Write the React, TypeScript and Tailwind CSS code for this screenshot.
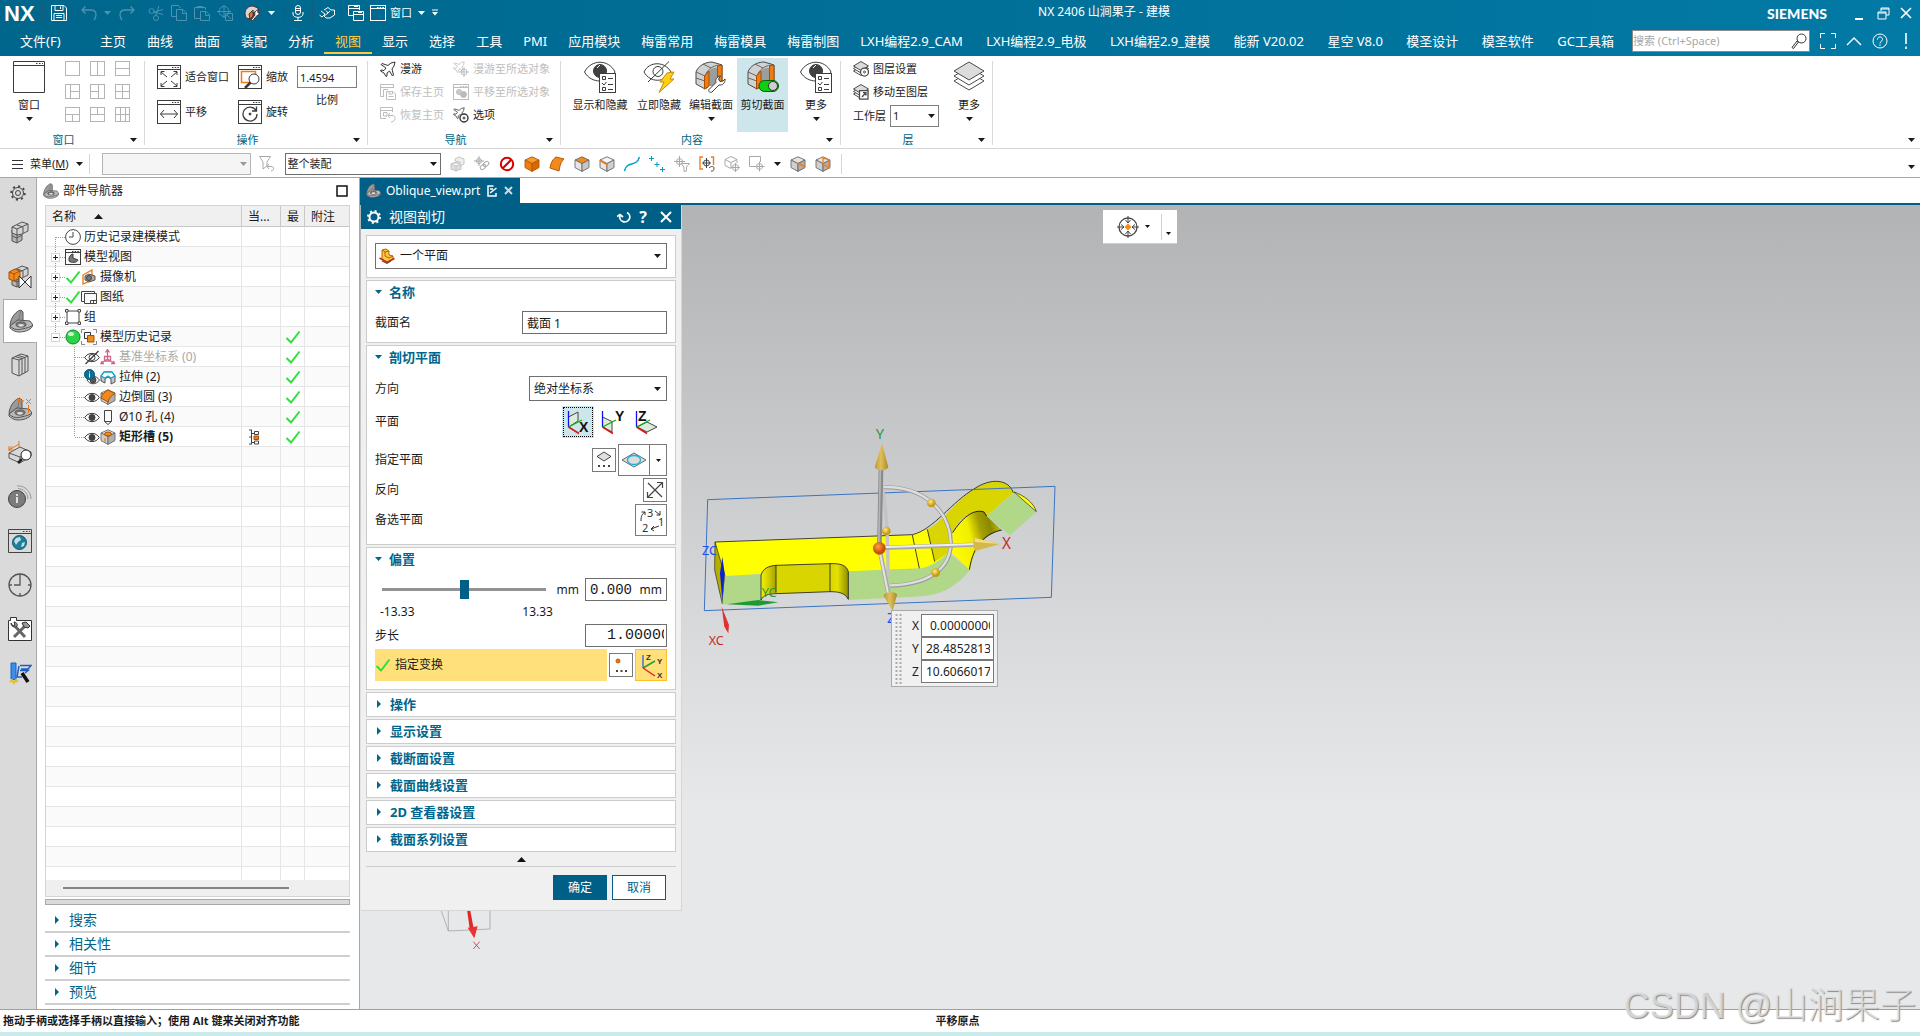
import React, { ReactNode } from "react";

type IconProps = { s?: number; vb?: number; c?: string; className?: string; children?: ReactNode };

function Svg({ s = 16, vb, c = "#4a4a4a", className = "", children }: IconProps) {
  const v = vb ?? s;
  return (
    <svg
      width={s}
      height={s}
      viewBox={`0 0 ${v} ${v}`}
      fill="none"
      stroke={c}
      strokeWidth={1}
      className={`shrink-0 ${className}`}
      aria-hidden="true"
    >
      {children}
    </svg>
  );
}

function Caret({ c = "#1a1a1a", className = "" }: { c?: string; className?: string }) {
  return (
    <svg width="7" height="4" viewBox="0 0 7 4" className={`shrink-0 ${className}`} aria-hidden="true">
      <path d="M0 0H7L3.5 4Z" fill={c} />
    </svg>
  );
}

/* ---------- shared drawings ---------- */

function Win({ s = 24, c = "#3c3c3c", children }: IconProps) {
  return (
    <Svg s={s} c={c}>
      <rect x=".5" y=".5" width={s - 1} height={s - 1} fill={s > 20 ? "#fff" : "none"} />
      <path d={`M0 ${s > 20 ? 4.5 : 3.5}H${s}`} />
      <path d={`M${s - 9} 2.5H${s - 2}`} strokeDasharray="1.5 1.2" />
      {children}
    </Svg>
  );
}

function Cube({ s = 16, top = "#e4e4e4", left = "#cfcfcf", right = "#b0b0b0", line = "#6a6a6a", children }: IconProps & { top?: string; left?: string; right?: string; line?: string }) {
  return (
    <Svg s={s} vb={16} c={line}>
      <g strokeLinejoin="round" strokeWidth=".9">
        <path d="M8 .8L15 4L8 7.6L1 4Z" fill={top} />
        <path d="M1 4L8 7.6V15.4L1 11.6Z" fill={left} />
        <path d="M15 4L8 7.6V15.4L15 11.6Z" fill={right} />
      </g>
      {children}
    </Svg>
  );
}

function Bracket({ s = 24 }: { s?: number }) {
  return (
    <Svg s={s} vb={24} c="#555">
      <path d="M1 16C2 8 7 2 12 1L14 3V12L7 15L2 18Z" fill="#9b9b9b" />
      <path d="M12 1L10 10L2 16" stroke="#777" />
      <path d="M1 17L9 11L21 12L24 16C23 20 17 23 10 23C6 23 3 21 1 19Z" fill="#b9b9b9" />
      <path d="M1 17C5 21 9 21 13 20C18 19 22 18 24 16" />
      <ellipse cx="12" cy="15.5" rx="5" ry="2.6" fill="#777" />
      <ellipse cx="12" cy="16.3" rx="3" ry="1.4" fill="#ddd" stroke="none" />
    </Svg>
  );
}

function Eye({ s = 16, off = false }: { s?: number; off?: boolean }) {
  return (
    <Svg s={s} vb={16} c="#3c3c3c">
      <path d="M.7 8.5C4 3 12 3 15.3 8.5C12 14 4 14 .7 8.5Z" fill="#fff" />
      <circle cx="8" cy="8.5" r="3" fill={off ? "none" : "#444"} />
      {off && <path d="M1.5 15L14.5 2" strokeWidth="1.3" />}
    </Svg>
  );
}

function Check() {
  return (
    <Svg s={16} c="#2ee03c">
      <path d="M1.5 9L6 13.5L14.5 2.5" strokeWidth="2" />
    </Svg>
  );
}

function Wrench({ t }: { t?: string }) {
  return (
    <g transform={t}>
      <path
        d="M1 15.5L8 8.5C7 6 8.5 2.5 12.5 2L10.5 5L12 7.5L15 7L17 5C17.5 9 14.5 11.5 11 11L4 18C2 19 0 17.5 1 15.5Z"
        fill="#fff"
        stroke="#3c3c3c"
      />
    </g>
  );
}

function Layers({ s = 32, children }: IconProps) {
  return (
    <Svg s={s} vb={32} c="#4a4a4a">
      {[10, 5, 0].map((d) => (
        <path key={d} d={`M16 ${1 + d}L31 ${10 + d}L16 ${19 + d}L1 ${10 + d}Z`} fill={d === 0 ? "#dcdcdc" : "#fff"} strokeWidth={s < 20 ? 2 : 1} />
      ))}
      {children}
    </Svg>
  );
}

function SectionBody({ children }: { children?: ReactNode }) {
  return (
    <Svg s={32} c="#4a4a4a">
      <path d="M1 11C3 5 10 1 17 1L24 3L27 4V22L22 25V12C21 9 15 10 13 13V26L10 28L1 23Z" fill="#d2d2d2" />
      <path d="M13 13C14 7 20 6 24 7V24L17 25L13 25Z" fill="#9d9d9d" stroke="none" />
      <path d="M1 11L10 15M1 17L10 20M10 15V28M10 15C12 9 17 5 24 4M8 3L16 7" stroke="#666" />
      <path d="M9.5 15L14 10V25L9.5 28Z" fill="#f07d14" stroke="#a85000" />
      <path d="M22.500 5L27 4V20L22.500 23Z" fill="#f07d14" stroke="#a85000" />
      {children}
    </Svg>
  );
}

function EyeList() {
  return (
    <Svg s={32} c="#3c3c3c">
      <path d="M.5 11C7 -2 25 -2 31 11C25 23 7 23 .5 11Z" fill="#fff" />
      <circle cx="16" cy="10" r="6.5" fill="#3f4143" />
      <path d="M13 7L16 4" stroke="#fff" />
      <rect x="15.500" y="12.500" width="16" height="19" fill="#fff" />
      <path d="M18.500 15.500h3v3h-3zM18.500 26.500h3v3h-3zM24 17.500h5M24 23.500h5M24 28.500h5M18 22l2 2l2.500-3" />
    </Svg>
  );
}

/* ---------- title bar and menu ---------- */

const coreMenus = ["主页", "曲线", "曲面", "装配", "分析", "视图", "显示", "选择", "工具", "PMI", "应用模块", "梅雷常用", "梅雷模具", "梅雷制图"];
const extraMenus = ["LXH编程2.9_CAM", "LXH编程2.9_电极", "LXH编程2.9_建模", "能新 V20.02", "星空 V8.0", "模圣设计", "模圣软件", "GC工具箱"];

function Bar({ className = "" }: { className?: string }) {
  return <span className={`h-[18px] w-px bg-[#1b5a76] ${className}`} />;
}

function IconButton({ label, className = "", children }: { label: string; className?: string; children: ReactNode }) {
  return (
    <button type="button" aria-label={label} className={`flex shrink-0 items-center justify-center ${className}`}>
      {children}
    </button>
  );
}

function TitleBar() {
  const dim = "#4d93b0";
  return (
    <div className="relative flex h-[26px] items-center text-white">
      <span className="ml-1 w-[38px] pt-0.5 font-['Liberation_Sans',sans-serif] text-[22px] leading-6 font-bold">NX</span>
      <Bar />
      <IconButton label="保存" className="mx-2">
        <Svg c="#fff">
          <path d="M.5 .5H13L15.500 3V15.500H.5ZM4 .5V5.500H12V.5M3 15V8.500H13V15M9.500 1.500V4M5 10.500H11M5 12.500H11" />
        </Svg>
      </IconButton>
      <Bar />
      <IconButton label="撤销" className="ml-1 w-[17px]">
        <Svg c={dim}><path d="M4.500 1.500L1 5L4.500 8.500M1 5H10C16 5 16 11 13 15" strokeWidth="1.300" /></Svg>
      </IconButton>
      <Caret c={dim} className="mx-[7px]" />
      <IconButton label="重做" className="w-[17px]">
        <Svg c={dim}><path d="M11.500 1.500L15 5L11.500 8.500M15 5H6C0 5 0 11 3 15" strokeWidth="1.300" /></Svg>
      </IconButton>
      <Bar className="ml-1.5" />
      <div className="ml-1.5 flex gap-[7px]">
        <IconButton label="剪切"><Svg c={dim}><circle cx="3.500" cy="6" r="2.500" /><circle cx="8" cy="13" r="2.500" /><path d="M5.500 7L15 9.500M7.500 10.500L11 1M6 7L15 4.500" /></Svg></IconButton>
        <IconButton label="复制"><Svg c={dim}><path d="M5 11.500H.5V.5H7.500L9.500 3M5.500 4.500H12L15.500 8V15.500H5.500ZM11.500 4.500V8.500H15.500" /></Svg></IconButton>
        <IconButton label="粘贴"><Svg c={dim}><path d="M6 13.500H.5V2.500H11.500V5M3.500 3.500V1.500H8.500V3.500M6.500 6.500H12L15.500 9.500V15.500H6.500ZM11.500 6.500V10.500H15.500" /></Svg></IconButton>
        <IconButton label="特性"><Svg c={dim}><circle cx="7" cy="6.500" r="5" /><path d="M7 0V13M0 6.500H14M8.500 8.500H15.500V15.500H8.500ZM10 10L14 14" /></Svg></IconButton>
      </div>
      <Bar className="ml-1.5" />
      <IconButton label="编辑截面" className="ml-1">
        <Svg c="#433">
          <path d="M1 9C1 4 4 1 9 1L14 3V8L10 7L7 10V14L2 13Z" fill="#d8d5d2" />
          <path d="M5 9L9 5V11L6 14Z" fill="#e9711c" />
          <path d="M7 15L11 10C10 7 12 5 15 5L13.500 7L15.500 9L12 11.500L9 15.500Z" fill="#fff" />
        </Svg>
      </IconButton>
      <Caret c="#fff" className="mx-2" />
      <Bar />
      <IconButton label="语音" className="mx-2 w-3"><Svg c="#fff"><rect x="5.500" y=".5" width="5" height="9" rx="2.500" /><path d="M3 7V9C3 13.500 13 13.500 13 9V7M8 12.500V15M4 15.500H12M6 3.500H10M6 5.500H10" /></Svg></IconButton>
      <Bar />
      <IconButton label="触控" className="mx-1.5"><Svg c="#fff"><path d="M2 6L6 9L3 12L.5 10M5 5L9 2.500L12 5H15.500V10L11 13H7L5 11L9 8L7 5.500M11 6L9 8" /></Svg></IconButton>
      <Bar />
      <div className="ml-1.5 flex items-center gap-1.5">
        <IconButton label="层叠窗口"><Svg c="#fff"><path d="M5 10.500H.5V.5H11.500V5M.5 3.500H11M5.500 6.500H15.500V15.500H5.500ZM5.500 9.500H15.500M6 1.500H10M10 7.500H14" /></Svg></IconButton>
        <button type="button" className="flex items-center gap-1 text-[11px] leading-4"><Win s={16} c="#fff" />窗口<Caret c="#fff" className="ml-0.5" /></button>
        <IconButton label="自定义"><Svg s={8} c="#fff"><path d="M1 1H7" /><path d="M1 3H7L4 6.500Z" fill="#fff" stroke="none" /></Svg></IconButton>
      </div>
      <h1 className="absolute inset-x-0 top-1 mx-auto w-fit pl-[288px] text-xs leading-4 font-normal">NX 2406 山涧果子 - 建模</h1>
      <div className="ml-auto flex items-center">
        <span className="mr-[26px] pt-0.5 font-[Lato,sans-serif] text-sm leading-4 font-black">SIEMENS</span>
        <IconButton label="最小化" className="mr-3 h-4 w-3"><span className="mt-3 h-0.5 w-2 bg-white" /></IconButton>
        <IconButton label="还原" className="mr-2.5"><Svg s={13} c="#fff"><path d="M4 4V1H12V8H9M1 5H9V12H1ZM1 6H9M4 2H12" /></Svg></IconButton>
        <IconButton label="关闭" className="mr-2"><Svg s={12} c="#fff"><path d="M1 1L11 11M11 1L1 11" strokeWidth="1.600" /></Svg></IconButton>
      </div>
    </div>
  );
}

function MenuBar() {
  return (
    <div className="flex h-[30px] items-center pr-1.5 text-[13px] leading-4 text-white">
      <button type="button" className="ml-5 w-20 text-left">文件(F)</button>
      <nav className="flex flex-1 gap-[21px] whitespace-nowrap">
        {coreMenus.map((m) =>
          m === "视图" ? (
            <button key={m} type="button" aria-current="page" className="relative text-[#ffcb45]">
              {m}
              <span className="absolute -inset-x-[11px] -bottom-[5px] h-0.5 bg-[#ffc845]" />
            </button>
          ) : (
            <button key={m} type="button">{m}</button>
          ),
        )}
        <div className="flex flex-1 justify-between">
          {extraMenus.map((m) => (
            <button key={m} type="button">{m}</button>
          ))}
        </div>
      </nav>
      <label className="ml-[18px] flex h-[22px] w-[178px] items-center border border-[#8a8a8a] bg-white pr-0.5">
        <input aria-label="搜索" placeholder="搜索 (Ctrl+Space)" className="w-full min-w-0 flex-1 text-[11px] leading-4 text-black outline-none placeholder:text-[#a8a8a8]" />
        <Svg s={16} c="#333"><circle cx="10.500" cy="5.500" r="4.500" /><path d="M7.500 9L6 8L1 14.500L2.500 15.500Z" /></Svg>
      </label>
      <IconButton label="全屏" className="ml-2.5"><Svg c="#fff"><path d="M.5 5V.5H5M11 .5H15.500V5M15.500 11V15.500H11M5 15.500H.5V11" /></Svg></IconButton>
      <IconButton label="最小化功能区" className="ml-2.5"><Svg c="#fff"><path d="M1 12L8 5L15 12" strokeWidth="1.400" /></Svg></IconButton>
      <IconButton label="帮助" className="ml-2.5"><Svg c="#fff"><circle cx="8" cy="8" r="7" /><path d="M5.500 6.500C5.500 3 10.500 3 10.500 6.500C10.500 8.500 8 8 8 10.500M8 11.500V13" /></Svg></IconButton>
      <IconButton label="警报" className="ml-2.5"><Svg c="#fff"><path d="M8 0V11M8 13.500V16" strokeWidth="1.600" /></Svg></IconButton>
    </div>
  );
}

/* ---------- ribbon ---------- */

function Group({ title, className, children }: { title: string; className: string; children: ReactNode }) {
  return (
    <section className={`relative flex h-[92px] shrink-0 flex-col ${className}`}>
      <div className="flex h-[76px] items-start">{children}</div>
      <div className="relative flex h-4 items-center justify-center pr-[18px] text-[11px] leading-4 text-[#00647f]">
        {title}
        <Caret className="absolute right-2" />
      </div>
      <span className="absolute right-0 top-[5px] h-[84px] w-px bg-[#dadada]" />
    </section>
  );
}

function Tool({ label, dim, children }: { label: string; dim?: boolean; children: ReactNode }) {
  return (
    <button type="button" className={`flex h-4 items-center gap-1 whitespace-nowrap ${dim ? "text-[#bdbdbd]" : "text-[#1a1a1a]"}`}>
      {children}
      {label}
    </button>
  );
}

function Big({ label, caret, on, className = "", children }: { label: string; caret?: boolean; on?: boolean; className?: string; children: ReactNode }) {
  return (
    <button
      type="button"
      aria-pressed={on}
      className={`mt-0.5 flex h-[74px] flex-col items-center pt-[3px] whitespace-nowrap ${on ? "bg-[#cde6eb]" : ""} ${className}`}
    >
      {children}
      <span className="mt-1 leading-4">{label}</span>
      {caret && <Caret className="mt-1" />}
    </button>
  );
}

const layouts = [
  "", "M7.500 0V15", "M0 7.500H15",
  "M5.500 0V15M5.500 7.500H15", "M8.500 0V15M0 7.500H8.500", "M7.500 0V15M0 7.500H15",
  "M0 7.500H15M7.500 7.500V15", "M0 7.500H15M7.500 0V7.500", "M5.500 0V15M10.500 0V15M0 7.500H15",
];

function Ribbon() {
  const gray = "#bdbdbd";
  const plane = (
    <path d="M15 1L11 2L8 4.500L2 2.500L1 3.500L6 7L4 9.500L1 9L.5 10L4 12L6 15.500L7 15L7 12L9.500 10L12.500 15L13.500 14L12 8L14 5Z" />
  );
  return (
    <div className="flex h-[93px] shrink-0 border-b border-[#d6d6d6] bg-white text-[11px] leading-4 text-[#1a1a1a]">
      <Group title="窗口" className="w-[145px]">
        <Big label="窗口" caret className="ml-[13px] w-8">
          <svg width="32" height="32" viewBox="0 0 32 32" fill="none" stroke="#3c3c3c" aria-hidden="true"><path d="M.5 .5H31.500V31.500H.5ZM.5 4.500H31.500" /><path d="M23 2.500H30" strokeDasharray="1.500 1.500" /></svg>
        </Big>
        <div className="mt-[5px] ml-5 grid grid-cols-3 gap-x-[10px] gap-y-2">
          {layouts.map((d, i) => (
            <IconButton key={i} label={`布局 ${i + 1}`}>
              <Svg s={15} c="#b4b4b4"><rect x=".5" y=".5" width="14" height="14" /><path d={d} /></Svg>
            </IconButton>
          ))}
        </div>
      </Group>
      <Group title="操作" className="w-[223px]">
        <div className="mt-[9px] ml-3 grid grid-cols-[81px_auto] gap-y-[11px]">
          <button type="button" className="flex h-6 items-center gap-1 whitespace-nowrap"><Win><path d="M10 12L4 7M4 10V6.500H7.500M14 12L20 7M20 10V6.500H16.500M10 16L4 21M4 18V21.500H7.500M14 16L20 21M20 18V21.500H16.500" /></Win>适合窗口</button>
          <button type="button" className="flex h-6 items-center gap-1"><Win><rect x="3.500" y="6.500" width="14" height="11" stroke="#f07d14" strokeWidth="1.500" /><circle cx="16" cy="14" r="5" fill="#fff" /><path d="M12.500 17.500L7 23" strokeWidth="2.500" /></Win>缩放</button>
          <button type="button" className="flex h-6 items-center gap-1"><Win><path d="M3.500 14H20.500M7 10L3.500 14L7 18M17 10L20.500 14L17 18" /></Win>平移</button>
          <button type="button" className="flex h-6 items-center gap-1"><Win><path d="M18 10.500A7 7 0 1 0 19 14M18.500 6.500V11H14" strokeWidth="1.300" /><circle cx="12" cy="14" r="1" fill="#333" /></Win>旋转</button>
        </div>
        <label className="mt-[10px] ml-[9px] flex flex-col items-center">
          <input defaultValue="1.4594" className="h-[22px] w-[60px] border border-[#808080] px-0.5 text-[11px] leading-4" />
          <span className="mt-1">比例</span>
        </label>
      </Group>
      <Group title="导航" className="w-[193px]">
        <div className="mt-[5px] ml-3 grid grid-cols-[73px_auto] gap-y-[7px]">
          <Tool label="漫游"><Svg c="#333">{plane}</Svg></Tool>
          <Tool label="漫游至所选对象" dim><Svg c={gray}><g transform="scale(.75)">{plane}</g><circle cx="11" cy="11" r="3" /><path d="M11 6V16M6 11H16" /></Svg></Tool>
          <Tool label="保存主页" dim><Svg c={gray}><path d="M4 12.500H.5V.5H13.500V4M.5 3.500H13M3.500 12V5.500H8M6.500 7.500H13L15.500 10V15.500H6.500ZM9 7.500V10H12.500V7.500M8.500 12.500H13.500" /></Svg></Tool>
          <Tool label="平移至所选对象" dim><Win s={16} c={gray}><circle cx="6" cy="8" r="2.500" fill="#ccc" /><circle cx="10.500" cy="10.500" r="3" fill="#bbb" /></Win></Tool>
          <Tool label="恢复主页" dim><Svg c={gray}><path d="M6 11.500H.5V.5H12.500V5M.5 3.500H12M3.500 9V5.500H7V9ZM10 6L8 8.500L10 11M8 8.500H12C16.500 8.500 16 14.500 11 15" /></Svg></Tool>
          <Tool label="选项"><Svg c="#333"><g transform="scale(.75)">{plane}</g><circle cx="11" cy="11" r="4" fill="#fff" strokeWidth="1.400" /><circle cx="11" cy="11" r="1" /></Svg></Tool>
        </div>
      </Group>
      <Group title="内容" className="w-[280px]">
        <Big label="显示和隐藏" className="ml-2.5 w-[58px]"><EyeList /></Big>
        <Big label="立即隐藏" className="ml-[7px] w-[46px]">
          <Svg s={32} c="#3c3c3c">
            <path d="M1 11C6 0 22 0 28 11C22 22 7 22 1 11Z" />
            <circle cx="15" cy="10.500" r="5" />
            <path d="M5 21L26 .5" />
            <path d="M24 12L31 11L27 18H31L16 31.500L21 21H17Z" fill="#fdd017" stroke="#c78a00" />
          </Svg>
        </Big>
        <Big label="编辑截面" caret className="ml-1.5 w-[46px]">
          <SectionBody><Wrench t="translate(13 13)" /></SectionBody>
        </Big>
        <Big label="剪切截面" on className="ml-[3px] w-[51px]">
          <SectionBody>
            <rect x="12" y="19.500" width="19.500" height="11" rx="5.500" fill="#0ccf14" stroke="#045f08" />
            <circle cx="26" cy="25" r="4.500" fill="#cfcfcf" stroke="#333" />
          </SectionBody>
        </Big>
        <Big label="更多" caret className="ml-3 w-8"><EyeList /></Big>
      </Group>
      <Group title="层" className="w-[152px]">
        <div className="mt-[5px] ml-3 flex w-[87px] flex-col gap-[7px]">
          <Tool label="图层设置"><Layers s={16}><circle cx="23" cy="22" r="8" fill="#fff" strokeWidth="2.500" /><circle cx="23" cy="22" r="2" strokeWidth="2" /></Layers></Tool>
          <Tool label="移动至图层"><Layers s={16}><path d="M13 13H30V30H13ZM18 26L26 17M20 17H26V23" fill="#fff" strokeWidth="2.500" /></Layers></Tool>
          <label className="-mt-0.5 flex items-center gap-1 whitespace-nowrap">
            工作层
            <span className="relative flex items-center">
              <select className="h-[22px] w-[49px] appearance-none border border-[#808080] bg-white px-0.5 leading-4"><option>1</option></select>
              <Caret className="pointer-events-none absolute right-1" />
            </span>
          </label>
        </div>
        <Big label="更多" caret className="ml-[13px] w-8"><Layers /></Big>
      </Group>
      <IconButton label="功能区选项" className="mt-[82px] mr-[5px] ml-auto h-1"><Caret /></IconButton>
    </div>
  );
}

function SelectionBar() {
  const g = "#a9a9a9";
  return (
    <div className="flex h-[29px] shrink-0 items-center border-b border-[#a6a6a6] bg-white pt-0.5 text-[11px] leading-4 text-[#1a1a1a]">
      <button type="button" className="ml-3 flex items-center gap-[7px]">
        <Svg s={11} c="#333"><path d="M0 1.500H11M0 5.500H11M0 9.500H11" /></Svg>
        <span>菜单(<u>M</u>)</span>
        <Caret />
      </button>
      <span className="ml-1.5 h-5 w-px bg-[#d6d6d6]" />
      <span className="relative ml-3 flex items-center">
        <select disabled aria-label="类型过滤器" className="h-[22px] w-[149px] appearance-none border border-[#b4b4b4] bg-[#f5f5f5]"><option></option></select>
        <Caret c="#999" className="absolute right-1" />
      </span>
      <IconButton label="重置过滤器" className="ml-2"><Svg c={g}><path d="M.5 .5H11.500L8 6V10L4 13V6ZM10 8L8 10.500L10 13M8 10.500H12C16 10.500 15 15 12 15" /></Svg></IconButton>
      <span className="relative ml-2.5 flex items-center">
        <select aria-label="选择范围" className="h-[22px] w-[156px] appearance-none border border-[#6e6e6e] bg-white px-0.5 leading-4"><option>整个装配</option></select>
        <Caret className="pointer-events-none absolute right-1" />
      </span>
      <div className="ml-2 flex items-center gap-[9px]">
        <IconButton label="组件"><Svg c="#c4c4c4"><path d="M2 8L7 6L12 8V13L7 15L2 13ZM2 8L7 10L12 8M7 10V15" fill="#dedede" /><path d="M6 3L10 1L15 3V8L11 10V6L6 5Z" fill="#efefef" /></Svg></IconButton>
        <IconButton label="关联"><Svg c={g}><path d="M5 0V10M0 5H10" /><circle cx="5" cy="5" r="2.500" /><rect x="6" y="9" width="6" height="4" rx="2" transform="rotate(-40 9 11)" /><rect x="9" y="6" width="6" height="4" rx="2" transform="rotate(-40 12 8)" /></Svg></IconButton>
        <IconButton label="禁止"><Svg c="#d40000"><circle cx="8" cy="8" r="6.200" strokeWidth="2" /><path d="M4 12L12 4" strokeWidth="2" /></Svg></IconButton>
        <IconButton label="实体"><Cube top="#f79a2e" left="#ee7d10" right="#d96800" line="#b35a00" /></IconButton>
        <IconButton label="面"><Svg c="#b35a00"><path d="M1 12C2 6 4 3 7 1L15 3C12 6 11 9 10 15Z" fill="#f08a1c" /></Svg></IconButton>
        <IconButton label="顶面"><Cube top="#f58a1b" left="#e6e6e6" right="#c6c6c6" /></IconButton>
        <IconButton label="边"><Cube top="#f4f4f4" left="#e6e6e6" right="#cfcfcf"><path d="M1 4.500L8 8.500" stroke="#f07d14" strokeWidth="1.600" /></Cube></IconButton>
        <IconButton label="曲线"><Svg c="#00a0c4"><path d="M.5 15C3 4 12 12 15.500 1" strokeWidth="1.400" /></Svg></IconButton>
        <IconButton label="点"><Svg c="#00a0c4"><path d="M2.500 0V5M0 2.500H5M8 6V11M5.500 8.500H10.500M13.500 11V16M11 13.500H16" /></Svg></IconButton>
        <IconButton label="点过滤器"><Svg c={g}><circle cx="5.500" cy="5.500" r="3" /><path d="M5.500 0V11M0 5.500H11M7 7.500H15.500L12.500 11V15L10 15.500V11Z" /></Svg></IconButton>
        <IconButton label="捕捉点"><Svg c="#444"><path d="M4 1H1V13H4M12 1H14.500V9" stroke="#f07d14" strokeWidth="1.400" /><circle cx="7.500" cy="7" r="3" /><path d="M7.500 2V12M3 7H12" /><path d="M10 12C12 10 15 10 15 12C15 14 14 15.500 12 15" /></Svg></IconButton>
        <IconButton label="快速拾取"><Svg c={g}><path d="M7 .5L13 3.500V7M13 3.500L7 6.500L1 3.500L7 .5M1 3.500V9.500L7 12.500V6.500" /><circle cx="11.500" cy="11.500" r="3" /><path d="M11.500 7V16M7 11.500H16" /></Svg></IconButton>
        <IconButton label="矩形选择"><Svg c={g}><path d="M6 10.500H.5V.5H11.500V6" /><circle cx="10.500" cy="10.500" r="3" /><path d="M10.500 5.500V15.500M5.500 10.500H15.500" /></Svg></IconButton>
        <Caret />
        <IconButton label="显示边"><Cube><path d="M8 7L15 11" stroke="#f07d14" strokeWidth="1.800" /></Cube></IconButton>
        <IconButton label="显示面"><Cube><path d="M8 2L14 4V12L8 8Z" stroke="#f07d14" strokeWidth="1.300" /></Cube></IconButton>
      </div>
      <span className="ml-2.5 h-5 w-px bg-[#d6d6d6]" />
      <IconButton label="选择条选项" className="mt-1.5 mr-[5px] ml-auto"><Caret /></IconButton>
    </div>
  );
}

/* ---------- resource rail ---------- */

function Blocks({ orange }: { orange?: boolean }) {
  return (
    <Svg s={24} c="#555">
      <path d="M4 9L10 6L14 8V19L9 22L4 20Z" fill="#b4b4b4" />
      <path d="M4 9L9 11L14 8M9 11V22M4 15L9 17L14 14" />
      <path d="M4 6L14 1L20 3V10L14 13L9 14L4 12Z" fill="#d4d4d4" />
      <path d="M4 6L9 8L20 3M9 8V14M9 4L15 6V12" />
      {orange && (
        <>
          <path d="M1 7L7 4L12 6V13L6 16L1 14Z" fill="#f08a1c" stroke="#a85000" />
          <path d="M1 7L6 9L12 6M6 9V16" stroke="#a85000" />
          <path d="M11 11V23L23 11V23Z" fill="#fff" stroke="#333" />
        </>
      )}
    </Svg>
  );
}

const rail: { label: string; icon: ReactNode }[] = [
  { label: "装配导航器", icon: <Blocks /> },
  { label: "约束导航器", icon: <Blocks orange /> },
  { label: "部件导航器", icon: <Bracket /> },
  { label: "重用库", icon: <Svg s={24} c="#555"><path d="M4 5L13 1L20 3V18L11 23L4 20Z" fill="#d8d8d8" /><path d="M4 5L11 7V23M11 7L20 3M7 3.500L14 5.500V21M10 2.500L17 4.500V20" /></Svg> },
  { label: "PMI 导航器", icon: <div className="relative"><Bracket /><Svg s={24} c="#e8781a" className="absolute inset-0"><path d="M10 4H16M10 1V7M13 1L10 4L13 7M18 2L23 7M23 2L18 7M20.500 8V16" /></Svg></div> },
  { label: "检查", icon: <Svg s={24} c="#555"><path d="M1 12L12 6L23 11V15L12 22L1 17Z" fill="#d8d8d8" /><path d="M1 12L12 16L23 11M12 16V22" /><path d="M1 9L11 3M1 5V10M11 0V6M4 5L1 9L6 9" stroke="#e8781a" /><circle cx="18" cy="14" r="5" fill="#fff" stroke="#222" /><path d="M14 18L10 22" stroke="#222" strokeWidth="2.500" /></Svg> },
  { label: "信息", icon: <Svg s={24} c="#999"><circle cx="9" cy="14" r="8.500" fill="#7c7c7c" stroke="#444" /><path d="M9 12V18M9 9V11" stroke="#fff" strokeWidth="1.500" /><path d="M9 1C17 0 23 7 23 14M10 3.500C16 4 19.500 8 20 14" /></Svg> },
  { label: "浏览器", icon: <Svg s={24} c="#444"><path d="M.5 .5H23.500V23.500H.5ZM0 4.500H24" /><path d="M15 2.500H22" strokeDasharray="1.500 1.500" /><circle cx="11.500" cy="13.500" r="7" fill="#1e7f9a" stroke="#12586d" /><path d="M8 9L12 8L13 11L10 13L8 16L6 12ZM14 14L17 13L16 17L13 18Z" fill="#bfe0e8" stroke="none" /></Svg> },
  { label: "历史记录", icon: <Svg s={24} c="#555"><circle cx="12" cy="12" r="11" strokeWidth="1.300" /><path d="M12 3V12H6M1 12H4M20 12H23M12 20V23M12 1V3" strokeWidth="1.300" /></Svg> },
  { label: "加工工具", icon: <Svg s={24} c="#333"><path d="M.5 3.500H2.500V.5H8.500V3.500H23.500V23.500H.5Z" fill="#fff" /><path d="M6 8L17 20M18 8L6 20" stroke="#666" strokeWidth="3" /><path d="M3 6C3 10 7 11 9 9C10 7 8 5 6 5L7 8L5 9ZM14 6L18 5L22 9L20 11L16 10Z" fill="#999" /></Svg> },
  { label: "向导", icon: <Svg s={24} c="#1d5fc4"><path d="M3 2H8V19L3 18Z" fill="#3d8ee6" /><path d="M12 4.500H23L20 8H13M12 9.500H20L17 12M11 5L9 16H14" strokeWidth="1.500" /><path d="M2 21L4 19L6 22L8 19L10 21" stroke="#e9c21a" strokeWidth="2" /><path d="M14 12L20 21" stroke="#111" strokeWidth="3.500" /></Svg> },
];

function Rail() {
  return (
    <nav className="flex w-[37px] shrink-0 flex-col items-center border-r border-[#a8a8a8] bg-[#dadada]" aria-label="资源条">
      <IconButton label="设置" className="h-[33px] w-9 pb-1">
        <Svg s={16} c="#444"><circle cx="8" cy="8" r="5.500" /><circle cx="8" cy="8" r="2.500" /><circle cx="8" cy="8" r="6.800" strokeDasharray="2.200 3.100" strokeWidth="1.800" /></Svg>
      </IconButton>
      {rail.map((r) => (
        <IconButton
          key={r.label}
          label={r.label}
          className={`h-11 ${r.label === "部件导航器" ? "-mr-px w-[34px] self-end border border-r-0 border-[#a8a8a8] bg-white" : "w-9 pl-1"}`}
        >
          {r.icon}
        </IconButton>
      ))}
    </nav>
  );
}

/* ---------- part navigator ---------- */

type Row = { text: string; level: 0 | 1; box?: "+" | "-"; icons: ReactNode[]; dim?: boolean; bold?: boolean; ok?: boolean; mark?: boolean; last?: boolean; first?: boolean };

const rows: Row[] = [
  { text: "历史记录建模模式", level: 0, first: true, icons: [<Svg key="a" c="#444"><circle cx="8" cy="8" r="7.400" /><path d="M8 3V8H4" /></Svg>] },
  { text: "模型视图", level: 0, box: "+", icons: [<Win key="a" s={16}><path d="M4 9C5 6 7 5 8 5V9L13 11C12 14 6 14 4 12Z" fill="#777" /></Win>] },
  { text: "摄像机", level: 0, box: "+", icons: [<Check key="a" />, <Svg key="b" c="#e8781a"><path d="M2 6L11 1V11L2 15Z" fill="#fff" strokeWidth="1.300" /><path d="M4 7L8 5L14 7V11L8 13L4 11Z" fill="#aaa" stroke="#555" /><circle cx="8" cy="9" r="2.500" fill="#777" stroke="#444" /></Svg>] },
  { text: "图纸", level: 0, box: "+", icons: [<Check key="a" />, <Svg key="b" c="#444"><path d="M3 12.500H.5V2.500H13.500V4M3.500 4.500H15.500V14.500H3.500ZM9.500 14V11.500H15M12.500 11.500V14" /></Svg>] },
  { text: "组", level: 0, box: "+", icons: [<Svg key="a" c="#444"><path d="M2 2H14V14H2Z" /><path d="M.5 .5h2.500v2.500h-2.500zM13 .5h2.500v2.500h-2.500zM.5 13h2.500v2.500h-2.500zM13 13h2.500v2.500h-2.500z" fill="#fff" /></Svg>] },
  { text: "模型历史记录", level: 0, box: "-", last: true, ok: true, icons: [
    <Svg key="a" c="#0a8a20"><circle cx="8" cy="8" r="7" fill="#2fd34a" /><ellipse cx="6" cy="5" rx="3" ry="2" fill="#c9f7cf" stroke="none" /></Svg>,
    <Svg key="b" c="#888"><path d="M.5 4V.5H4M12 .5H15.500V4M15.500 12V15.500H12M4 15.500H.5V12" /><path d="M3.500 3.500H9.500V9.500H3.500Z" stroke="#333" /><path d="M6.500 6.500H13V13H6.500Z" fill="#f08a1c" stroke="#a85000" /></Svg>,
  ] },
  { text: "基准坐标系 (0)", level: 1, dim: true, ok: true, icons: [<Eye key="a" off />, <Svg key="b" c="#d0648c"><path d="M7.500 1V10L1.500 14M7.500 10L14 14M5.500 3.500L7.500 .5L9.500 3.500M4 14.500L1 14.500L2 12M11 14.500H14.500L13.500 12M4.500 7.500L10.500 7.500V12H4.500Z" strokeWidth="1.300" /></Svg>] },
  { text: "拉伸 (2)", level: 1, ok: true, icons: [
    <Svg key="a" c="#444"><path d="M3 11C6 6 12 6 15.500 11C12 16 6 16 3 11Z" fill="#fff" /><circle cx="9" cy="11" r="3" fill="#555" /><circle cx="5.500" cy="5.500" r="5" fill="#0d6f92" stroke="#0a5672" /><path d="M5.500 4.500V8.500M5.500 2.500V3.500" stroke="#fff" /></Svg>,
    <Svg key="b" c="#555"><path d="M1 7L4 3H12L15 7V13L11 15V10L8 8L5 10V14L1 12Z" fill="#c6c6c6" /><path d="M1 7L4 3H12L15 7L11 9L8 7L5 9Z" fill="#fff" stroke="#12a5c8" strokeWidth="1.300" /></Svg>,
  ] },
  { text: "边倒圆 (3)", level: 1, ok: true, icons: [<Eye key="a" />, <Cube key="b"><path d="M1 9C2 5 5 3 8 1L15 4.500C11 7 9 9 8 13Z" fill="#f08a1c" stroke="#a85000" /></Cube>] },
  { text: "Ø10 孔 (4)", level: 1, ok: true, icons: [<Eye key="a" />, <Svg key="b" c="#444"><path d="M4.500 1.500H11.500V12.500L8 15.500L4.500 12.500ZM4.500 12.500H11.500" /></Svg>] },
  { text: "矩形槽 (5)", level: 1, bold: true, ok: true, mark: true, last: true, icons: [<Eye key="a" />, <Cube key="b"><ellipse cx="8" cy="5" rx="3.500" ry="2" fill="#f08a1c" stroke="#a85000" /><path d="M5 9V13" stroke="#f08a1c" strokeWidth="1.500" /></Cube>] },
];

function TreeLines({ r }: { r: Row }) {
  if (r.level === 1) {
    return (
      <svg width="38" height="19" fill="none" stroke="#999" strokeDasharray="1 1" className="shrink-0" aria-hidden="true">
        <path d={r.last ? "M28.500 0V10" : "M28.500 0V20"} /><path d="M29 10.500H38" />
      </svg>
    );
  }
  return (
    <svg width="19" height="19" fill="none" stroke="#999" className="shrink-0" aria-hidden="true">
      <path d={r.first ? "M9.500 10V20" : r.last ? "M9.500 0V10" : "M9.500 0V20"} strokeDasharray="1 1" />
      <path d="M10 10.500H19" strokeDasharray="1 1" />
      {r.box && (
        <>
          <rect x="5.500" y="6.500" width="8" height="8" fill="#fff" stroke="#d5d5d5" />
          <path d={r.box === "+" ? "M7 10.500H12M9.500 8V13" : "M7 10.500H12"} stroke="#222" />
        </>
      )}
    </svg>
  );
}

const sections = ["搜索", "相关性", "细节", "预览"];

function Navigator() {
  const cell = "h-5 border-b border-[#e6e6e6] p-0";
  const mid = `${cell} border-l`;
  return (
    <aside className="flex w-[323px] shrink-0 flex-col border-r border-[#a8a8a8] bg-white pr-[9px] pl-2 text-xs leading-4 text-[#1a1a1a]">
      <header className="-ml-2 flex h-[27px] items-center pb-0.5 pl-1.5">
        <Bracket s={16} />
        <h2 className="ml-1">部件导航器</h2>
        <IconButton label="最大化" className="mr-0.5 ml-auto"><Svg s={12} c="#111"><rect x="1" y="1" width="10" height="10" strokeWidth="1.500" /></Svg></IconButton>
      </header>
      <div className="flex min-h-0 flex-1 flex-col border border-[#d4d4d4]">
        <div className="min-h-0 flex-1 overflow-hidden">
          <table className="w-full table-fixed border-separate border-spacing-0">
            <colgroup><col /><col className="w-[39px]" /><col className="w-6" /><col className="w-[45px]" /></colgroup>
            <thead>
              <tr className="bg-[#f0f0f0] text-left">
                <th className="h-[21px] border-b border-[#c8c8c8] p-0 pt-px pl-1.5 font-normal"><span className="flex items-center gap-[18px]">名称<svg width="9" height="5" aria-hidden="true"><path d="M0 5H9L4.500 0Z" fill="#1a1a1a" /></svg></span></th>
                <th className="border-b border-l border-[#c8c8c8] p-0 pt-px pl-1.5 font-normal">当...</th>
                <th className="border-b border-l border-[#c8c8c8] p-0 pt-px pl-1.5 font-normal">最</th>
                <th className="border-b border-l border-[#c8c8c8] p-0 pt-px pl-1.5 font-normal">附注</th>
              </tr>
            </thead>
            <tbody>
              {rows.map((r, i) => (
                <tr key={r.text} className={i % 2 ? "bg-[#fafafa]" : "bg-white"}>
                  <td className={cell}>
                    <div className={`flex h-[19px] items-center whitespace-nowrap ${r.dim ? "text-[#a8a8a8]" : ""} ${r.bold ? "font-bold" : ""}`}>
                      <TreeLines r={r} />
                      {r.icons}
                      <span className="ml-[3px]">{r.text}</span>
                    </div>
                  </td>
                  <td className={mid}>{r.mark && <Svg s={16} className="ml-1" c="#444"><path d="M5.500 1V15M5.500 4.500H8M5.500 13.500H8M3 1H6M3 8H6M3 15H6M8.500 2.500H12.500V5.500H8.500ZM8.500 12H12.500V15H8.500Z" /><path d="M8 7H12.500V10.500H8Z" fill="#f07d14" stroke="#a85000" /></Svg>}</td>
                  <td className={mid}>{r.ok && <span className="ml-1 block"><Check /></span>}</td>
                  <td className={mid} />
                </tr>
              ))}
              {Array.from({ length: 24 }, (_, i) => (
                <tr key={i} className={i % 2 ? "bg-white" : "bg-[#fafafa]"}>
                  <td className={cell} /><td className={mid} /><td className={mid} /><td className={mid} />
                </tr>
              ))}
            </tbody>
          </table>
        </div>
        <div className="flex h-4 shrink-0 items-center bg-[#efefef] pr-[60px] pl-[17px]"><span className="h-0.5 w-full bg-[#858585]" /></div>
      </div>
      <div className="mt-0.5 h-1.5 shrink-0 border border-[#a8a8a8] bg-[#dadada]" />
      <div className="pt-1 pb-1 text-sm">
        {sections.map((s) => (
          <button key={s} type="button" className="flex h-6 w-full items-center gap-2.5 border-b-2 border-[#cfcfcf] pl-2.5 leading-4 text-[#00668c]">
            <svg width="4" height="8" aria-hidden="true"><path d="M0 0V8L4 4Z" fill="#00668c" /></svg>
            {s}
          </button>
        ))}
      </div>
    </aside>
  );
}

/* ---------- section dialog ---------- */

function Panel({ title, children }: { title?: string; children: ReactNode }) {
  return (
    <section className="border border-[#cccccc] bg-white px-2 pb-2">
      {title && (
        <button type="button" className="flex h-6 items-center gap-[7px] pb-0.5 text-[13px] leading-4 font-bold text-[#00668c]">
          <Caret c="#00668c" />
          {title}
        </button>
      )}
      {children}
    </section>
  );
}

function Line({ label, className = "", children }: { label: string; className?: string; children: ReactNode }) {
  return (
    <div className={`flex items-center justify-between ${className}`}>
      <span>{label}</span>
      {children}
    </div>
  );
}

function AxisPlane({ letter, on }: { letter: "X" | "Y" | "Z"; on?: boolean }) {
  const face = { X: "M6.500 11L16 6V15L6.500 21Z", Y: "M6.500 11L16 15.500V26L6.500 21Z", Z: "M7 21L17 16L27 21L17 26Z" }[letter];
  const at = { X: [17, 26], Y: [19, 15], Z: [8, 15] }[letter];
  return (
    <button type="button" aria-pressed={!!on} aria-label={`${letter} 平面`} className={`h-8 w-8 p-0.5 ${on ? "bg-[#cde6eb]" : ""}`}>
      <svg width="28" height="28" viewBox="2 2 28 28" fill="none" className={on ? "outline-1 outline-dotted outline-black" : ""}>
        <path d={face} fill="#dcebdc" stroke="#444" />
        <path d="M6.500 21V5" stroke="#1010f0" strokeWidth="1.300" />
        <path d="M6.500 21L20 14" stroke="#10b010" strokeWidth="1.300" />
        <path d="M6.500 21L17 27.500" stroke="#d41414" strokeWidth="1.500" />
        <text x={at[0]} y={at[1]} fontSize="14" fontWeight="bold" fill="#111" fontFamily="Liberation Sans, sans-serif">{letter}</text>
      </svg>
    </button>
  );
}

const collapsed = ["操作", "显示设置", "截断面设置", "截面曲线设置", "2D 查看器设置", "截面系列设置"];
const btn = "flex items-center justify-center border border-[#7a7a7a] bg-white";

function Dialog() {
  return (
    <div role="dialog" aria-label="视图剖切" className="absolute top-0 left-px flex w-[321px] flex-col border-r border-b border-[#d6d6d6] bg-[#f0f0f0] text-xs leading-4 text-[#1a1a1a]">
      <header className="flex h-6 items-center bg-[#005f87] pr-2 pl-1.5 text-white">
        <Svg s={14} c="#fff"><circle cx="7" cy="7" r="4.500" strokeWidth="2" /><circle cx="7" cy="7" r="6" strokeDasharray="2 2.700" strokeWidth="2" /></Svg>
        <h2 className="ml-2 text-sm leading-5">视图剖切</h2>
        <div className="ml-auto flex items-center gap-1.5">
          <IconButton label="重置"><Svg s={14} c="#fff"><path d="M10 2.500A5 5 0 1 1 3 5.500M0 6.500L3 4.500L6 7" strokeWidth="1.700" /></Svg></IconButton>
          <button type="button" aria-label="帮助" className="w-3 text-base leading-5 font-bold">?</button>
          <IconButton label="关闭" className="ml-1"><Svg s={14} c="#fff"><path d="M2 2L12 12M12 2L2 12" strokeWidth="2" /></Svg></IconButton>
        </div>
      </header>
      <div className="flex flex-col gap-0.5 px-[5px] pt-1.5">
        <Panel>
          <div className="relative mt-[7px] flex h-[26px] items-center">
            <select aria-label="剖切类型" className="h-full w-full appearance-none border border-[#6e6e6e] bg-white pl-6"><option>一个平面</option></select>
            <Svg s={16} className="pointer-events-none absolute left-1" c="#a8680a">
              <path d="M3 2L7 1L10 3V7L14 8V11L8 14L3 11Z" fill="#ffc73a" /><path d="M3 2L6 4V8L10 10L14 8M6 4L10 3" /><path d="M.5 10L8 14.500L15.500 10.500" stroke="#d42020" strokeWidth="1.500" /><path d="M3 13L8 15.500L12 13" stroke="#444" />
            </Svg>
            <Caret className="pointer-events-none absolute right-1.5" />
          </div>
        </Panel>
        <Panel title="名称">
          <label className="mt-1.5 flex h-[23px] items-center justify-between">截面名<input defaultValue="截面 1" className="h-full w-[145px] border border-[#6e6e6e] px-1" /></label>
        </Panel>
        <Panel title="剖切平面">
          <label className="mt-1.5 flex h-[25px] items-center justify-between">
            方向
            <span className="relative flex h-full items-center">
              <select className="h-full w-[138px] appearance-none border border-[#6e6e6e] bg-white px-1"><option>绝对坐标系</option></select>
              <Caret className="pointer-events-none absolute right-1.5" />
            </span>
          </label>
          <Line label="平面" className="mt-[5px] h-8">
            <div className="mr-[5px] flex gap-0.5"><AxisPlane letter="X" on /><AxisPlane letter="Y" /><AxisPlane letter="Z" /></div>
          </Line>
          <Line label="指定平面" className="mt-1.5 h-8">
            <div className="flex items-center">
              <button type="button" aria-label="平面对话框" className={`mr-0.5 h-6 w-6 ${btn}`}><Svg s={18} c="#444"><path d="M9 1L16 5.500L9 10L2 5.500Z" fill="#e0e0e0" /><path d="M3 15H5M8 15H10M13 15H15" strokeWidth="2" /></Svg></button>
              <button type="button" aria-label="自动判断平面" className={`-mr-px h-8 w-8 ${btn}`}><Svg s={24} c="#666"><path d="M12 5L24 12L12 19L0 12Z" fill="#dcdcdc" /><ellipse cx="12" cy="12" rx="6.500" ry="4.500" stroke="#12b4dc" strokeWidth="1.300" /></Svg></button>
              <button type="button" aria-label="更多平面选项" className={`h-8 w-[18px] ${btn}`}><svg width="5" height="3" aria-hidden="true"><path d="M0 0H5L2.500 3Z" fill="#111" /></svg></button>
            </div>
          </Line>
          <Line label="反向" className="mt-0.5 h-6">
            <button type="button" aria-label="反向" className={`h-6 w-6 ${btn}`}><Svg s={18} c="#444"><path d="M2 2L16 16M1.500 16.500L16.500 1.500M11 1.500H16.500V7M1.500 11V16.500H7" strokeWidth="1.200" /></Svg></button>
          </Line>
          <Line label="备选平面" className="mt-0.5 h-8">
            <button type="button" aria-label="备选平面" className={`h-8 w-8 ${btn}`}>
              <svg width="28" height="28" viewBox="0 0 28 28" fill="none" stroke="#333" aria-hidden="true">
                <g fontSize="11" fill="#333" stroke="none" fontFamily="Noto Sans, sans-serif"><text x="10" y="11">3</text><text x="21" y="20">1</text><text x="5" y="26">2</text></g>
                <path d="M4 15C4 10 5 8 8 6M4.500 6H8V9M18 5L23 9M23 5V9H19.500M22 20L14 23M17 20L14 23L17 25" />
              </svg>
            </button>
          </Line>
        </Panel>
        <Panel title="偏置">
          <div className="mt-1.5 flex h-[23px] items-center pl-[7px]">
            <input
              type="range" aria-label="偏置" min={-13.33} max={13.33} step={0.01} defaultValue={0}
              className="h-[3px] w-[164px] appearance-none bg-[#929292] [&::-webkit-slider-thumb]:h-[19px] [&::-webkit-slider-thumb]:w-[9px] [&::-webkit-slider-thumb]:appearance-none [&::-webkit-slider-thumb]:bg-[#005f87]"
            />
            <label htmlFor="offset" className="ml-auto mr-1.5">mm</label>
            <span className="flex h-full w-[82px] items-center border border-[#6e6e6e] pr-1">
              <input id="offset" defaultValue="0.000" className="w-full min-w-0 pl-1 font-['Liberation_Mono',monospace] text-sm outline-none" />
              mm
            </span>
          </div>
          <div className="mt-0.5 flex h-[18px] items-center justify-between pr-[114px] pl-[5px]"><span>-13.33</span><span>13.33</span></div>
          <label className="mt-[3px] flex h-[23px] items-center justify-between">
            步长
            <span className="flex h-full w-[82px] items-center overflow-hidden border border-[#6e6e6e] pr-0.5 pl-[21px]">
              <input defaultValue="1.00000" className="w-full min-w-0 font-['Liberation_Mono',monospace] text-[15px] outline-none" />
            </span>
          </label>
          <div className="mt-0.5 flex h-8 items-center">
            <div className="flex h-full flex-1 items-center gap-1 bg-[#ffe07a]"><Check />指定变换</div>
            <button type="button" aria-label="点对话框" className={`mx-0.5 h-6 w-6 ${btn}`}><Svg s={18} c="#444"><circle cx="6" cy="5" r="2" fill="#e8781a" stroke="#c05a00" /><path d="M4 15H6M8.500 15H10.500M13 15H15" strokeWidth="2" /></Svg></button>
            <button type="button" aria-label="操控器" className="h-8 w-8 border border-[#ffbf2b] bg-[#ffe07a] p-px">
              <svg width="28" height="28" viewBox="0 0 28 28" fill="none" aria-hidden="true">
                <path d="M6 17V4" stroke="#3a78c8" strokeWidth="1.500" /><path d="M6 17L18 10" stroke="#22a03a" strokeWidth="1.500" /><path d="M6 17L18 25" stroke="#ee2020" strokeWidth="1.500" />
                <g fontSize="8" fontWeight="bold" fill="#333" fontFamily="Liberation Sans, sans-serif"><text x="9" y="9">Z</text><text x="20" y="13">Y</text><text x="20" y="27">X</text></g>
              </svg>
            </button>
          </div>
        </Panel>
        {collapsed.map((c) => (
          <button key={c} type="button" className="flex h-[25px] items-center gap-[9px] border border-[#cccccc] bg-white pb-0.5 pl-2.5 text-[13px] leading-4 font-bold text-[#00668c]">
            <svg width="4" height="8" aria-hidden="true"><path d="M0 0V8L4 4Z" fill="#00668c" /></svg>
            {c}
          </button>
        ))}
        <IconButton label="折叠" className="h-2.5"><svg width="9" height="5" aria-hidden="true"><path d="M0 5H9L4.500 0Z" fill="#111" /></svg></IconButton>
        <div className="mb-2.5 flex justify-end gap-[5px] border-t border-[#cccccc] pt-2 pr-2.5">
          <button type="button" className="h-[25px] w-[54px] bg-[#005f87] text-white">确定</button>
          <button type="button" className="h-[25px] w-[54px] border border-[#005f87] bg-white text-[#005f87]">取消</button>
        </div>
      </div>
    </div>
  );
}

/* ---------- graphics window ---------- */

function Model() {
  return (
    <svg width="400" height="290" viewBox="0 0 1200 870" fill="none" className="absolute top-[205px] left-80" fontFamily="Noto Sans, sans-serif">
      <defs>
        <linearGradient id="cyl" x1="0" x2="1"><stop offset="0" stopColor="#d8d400" /><stop offset=".4" stopColor="#e6e200" /><stop offset="1" stopColor="#8f8b00" /></linearGradient>
        <linearGradient id="arch" x1="0" y1=".6" x2="1" y2=".3"><stop offset="0" stopColor="#ffff00" /><stop offset=".4" stopColor="#f2ee00" /><stop offset=".62" stopColor="#a39f00" /><stop offset=".8" stopColor="#8c8800" /><stop offset="1" stopColor="#c5c100" /></linearGradient>
        <linearGradient id="slot" x1="0" x2="1"><stop offset="0" stopColor="#f4f000" /><stop offset=".5" stopColor="#d2ce00" /><stop offset="1" stopColor="#a39f00" /></linearGradient>
        <linearGradient id="cone" x1="0" x2="1"><stop offset="0" stopColor="#b89a38" /><stop offset=".45" stopColor="#e0c05a" /><stop offset="1" stopColor="#a98c28" /></linearGradient>
        <radialGradient id="gold" cx=".4" cy=".35"><stop offset="0" stopColor="#ffe98a" /><stop offset="1" stopColor="#c49a10" /></radialGradient>
        <radialGradient id="orb" cx=".4" cy=".35"><stop offset="0" stopColor="#ffa04a" /><stop offset="1" stopColor="#c85000" /></radialGradient>
      </defs>
      <path d="M105 396L697 374L742 358L812 425L806 428C780 450 760 468 720 476L505 485C500 465 480 460 450 461L288 466C265 468 250 475 243 492L135 500L104 470Z" fill="#ffff00" />
      <path d="M105 396L104 480L127 582L135 498Z" fill="#b5b000" stroke="#222" strokeWidth="2" />
      <path d="M742 358C790 335 830 270 885 235C930 205 985 205 1000 248L920 318C880 290 840 320 818 365L812 425L764 455Z" fill="#d9d500" />
      <path d="M818 368C845 325 880 295 912 306L920 318L965 360C925 370 885 400 870 480L812 425Z" fill="url(#arch)" />
      <path d="M818 368C845 325 880 295 912 306L920 318M965 360C920 370 880 400 868 480" stroke="#222" strokeWidth="3" />
      <path d="M135 498L245 492V570L127 584Z" fill="#b0d888" />
      <path d="M505 484L720 475C760 468 780 450 806 428L870 480C820 540 770 560 700 560L505 570Z" fill="#b0d888" />
      <path d="M1002 248L1069 305L990 376L922 318Z" fill="#b0d888" />
      <path d="M1002 246C1030 255 1062 278 1069 305Z" fill="#ffff00" stroke="#222" strokeWidth="2" />
      <path d="M243 570V495C250 475 265 468 288 466V548C265 552 250 555 243 570Z" fill="url(#slot)" />
      <path d="M288 466L450 461V545L288 551Z" fill="#d9d500" />
      <path d="M450 461C480 460 500 465 505 485V568C495 548 475 545 450 545Z" fill="url(#cyl)" />
      <path d="M105 396L697 374C760 360 815 275 885 235C930 205 985 205 1000 248M243 570V495C250 475 265 468 288 466L450 461C480 460 500 465 505 485V568C495 548 475 545 450 545L288 551C265 552 250 555 243 570M288 466V548M450 461V545M697 375L718 475M742 358L764 455" stroke="#222" strokeWidth="2.500" />
      <path d="M83 269L1125 229L1114 562L73 602Z" stroke="#3b74c4" strokeWidth="3" />
      <path d="M127 440L120 490L127 572L134 490Z" fill="#1020d8" />
      <path d="M140 583L235 570L295 577L235 587Z" fill="#1e9a34" />
      <path d="M125 590L147 645L145 670L133 650Z" fill="#e03030" />
      <g fontSize="38"><text x="66" y="435" fill="#2050f0">ZC</text><text x="245" y="562" fill="#2a9a3a">YC</text><text x="86" y="704" fill="#cc2a2a">XC</text><text x="587" y="86" fill="#2a9a3a" fontSize="44">Y</text><text x="966" y="416" fill="#cc2a2a" fontSize="46">X</text><text x="621" y="640" fill="#2050f0" fontSize="44">Z</text></g>
      <path d="M610 232C740 230 812 310 813 400C812 480 740 525 630 527" stroke="#9a9a9a" strokeWidth="12" />
      <path d="M610 231C740 229 811 310 812 400C811 480 740 524 630 526" stroke="#dedee2" strokeWidth="7" />
      <path d="M607 240C622 300 624 400 624 500" stroke="#c4c4c8" strokeWidth="10" />
      <path d="M598 415L603 175" stroke="#8a8a8a" strokeWidth="14" /><path d="M596 415L601 175" stroke="#b5b5b5" strokeWidth="5" />
      <path d="M598 414L888 404" stroke="#aaa" strokeWidth="13" /><path d="M598 412L888 402" stroke="#eee" strokeWidth="6" />
      <path d="M598 414L627 560" stroke="#aaa" strokeWidth="13" /><path d="M597 414L626 560" stroke="#e4e4e4" strokeWidth="6" />
      <path d="M606 100L625 172C620 184 590 184 584 172Z" fill="url(#cone)" />
      <path d="M960 402L884 384C878 395 880 415 886 423Z" fill="#d6b848" /><path d="M960 402L884 384L884 396Z" fill="#f3dc84" />
      <path d="M638 602L611 558C610 545 650 543 651 555Z" fill="url(#cone)" />
      {[[754, 279], [619, 363], [767, 488]].map(([x, y]) => <circle key={x} cx={x} cy={y} r="13" fill="url(#gold)" />)}
      <circle cx="598" cy="415" r="19" fill="url(#orb)" />
    </svg>
  );
}

const coords = [["X", "0.00000000", "pl-2"], ["Y", "28.48528137", "pl-1"], ["Z", "10.60660172", "pl-1"]];

function Viewport() {
  return (
    <div className="relative min-h-0 flex-1 overflow-hidden border-t-2 border-[#005f87] bg-linear-to-b from-[#b2b3b5] via-[#dadbdd] via-55% to-[#e6e8ea] to-75%">
      <svg width="60" height="60" viewBox="0 0 180 180" fill="none" className="absolute top-[702px] left-[75px]" aria-hidden="true">
        <path d="M15 0L40 72L165 66V-60M40 72V0" stroke="#999" strokeWidth="2" />
        <path d="M95 0L104 65H116L104 0Z" fill="#e02828" /><path d="M98 62L128 58L118 94Z" fill="#e83434" />
        <path d="M115 104L134 126M134 104L115 126" stroke="#d43030" strokeWidth="2.500" />
      </svg>
      <Model />
      <div className="absolute top-[405px] left-[531px] flex h-[77px] w-[107px] gap-2.5 border border-[#aaa] bg-[#f0f0f0] p-[3px] text-xs leading-4 text-[#222]">
        <svg width="7" height="70" aria-hidden="true"><path d="M1.500 0V70M5.500 0V70" stroke="#aaa" strokeWidth="2" strokeDasharray="2 2" /></svg>
        <div className="flex flex-1 flex-col">
          {coords.map(([k, v, pad]) => (
            <label key={k} className="flex flex-1 items-center justify-between">
              {k}
              <span className={`flex h-[23px] w-[73px] items-center border border-[#777] bg-white pr-[3px] ${pad}`}>
                <input defaultValue={v} className="w-full min-w-0 outline-none" />
              </span>
            </label>
          ))}
        </div>
      </div>
      <div className="absolute inset-x-0 top-[5px] mx-auto flex h-[34px] w-[74px] items-center border-b border-[#cfcfcf] bg-white">
        <IconButton label="定向点" className="ml-[13px]">
          <Svg s={24} c="#444"><circle cx="12" cy="12" r="9" strokeWidth="1.300" /><path d="M12 1V8M12 16V23M1 12H8M16 12H23M9.500 5L12 8L14.500 5M9.500 19L12 16L14.500 19M5 9.500L8 12L5 14.500M19 9.500L16 12L19 14.500" /><path d="M12 8.500L15.500 12L12 15.500L8.500 12Z" fill="#f58a1b" stroke="none" /></Svg>
        </IconButton>
        <svg width="5" height="3" className="ml-[5px]" aria-hidden="true"><path d="M0 0H5L2.500 3Z" fill="#111" /></svg>
        <span className="ml-[11px] h-[26px] w-px bg-[#d0d0d0]" />
        <svg width="5" height="3" className="mt-3.5 ml-1" aria-hidden="true"><path d="M0 0H5L2.500 3Z" fill="#111" /></svg>
      </div>
      <Dialog />
    </div>
  );
}

export default function App() {
  return (
    <div className="relative flex h-screen flex-col overflow-hidden bg-white font-['Noto_Sans','Noto_Sans_CJK_SC',sans-serif]">
      <header className="shrink-0 bg-linear-to-r from-[#00668c] to-[#027aa5]">
        <TitleBar />
        <MenuBar />
      </header>
      <Ribbon />
      <SelectionBar />
      <main className="flex min-h-0 flex-1">
        <Rail />
        <Navigator />
        <div className="flex min-w-0 flex-1 flex-col">
          <div className="flex h-[25px] shrink-0 bg-white">
            <div className="flex w-40 items-center bg-[#005f87] pl-1.5 text-xs leading-4 text-white">
              <Bracket s={15} />
              <span className="ml-[5px]">Oblique_view.prt</span>
              <Svg s={12} c="#fff" className="ml-1.5"><path d="M7.500 1H2V11H10V8M4 4H7M4 8L10.500 3" strokeWidth="1.500" /></Svg>
              <IconButton label="关闭文件" className="ml-1.5"><Svg s={9} c="#d6d6d6"><path d="M1 1L8 8M8 1L1 8" strokeWidth="2" /></Svg></IconButton>
            </div>
          </div>
          <Viewport />
        </div>
      </main>
      <footer className="grid h-[27px] shrink-0 grid-cols-[1fr_auto_1fr] border-t border-[#a0a0a0] border-b-4 border-b-[#c9ebec] pr-2 pl-[3px] text-[11px] leading-[21px] font-bold text-[#1a1a1a]">
        <span>拖动手柄或选择手柄以直接输入；使用 Alt 键来关闭对齐功能</span>
        <span>平移原点</span>
      </footer>
      <div className="pointer-events-none absolute right-1 bottom-2.5 font-['Liberation_Sans','Noto_Sans_CJK_SC',sans-serif] text-4xl font-light whitespace-nowrap text-[#e6e6e6]/80 [text-shadow:1px_1px_1px_#8a8a8a]">
        CSDN @山涧果子
      </div>
    </div>
  );
}
